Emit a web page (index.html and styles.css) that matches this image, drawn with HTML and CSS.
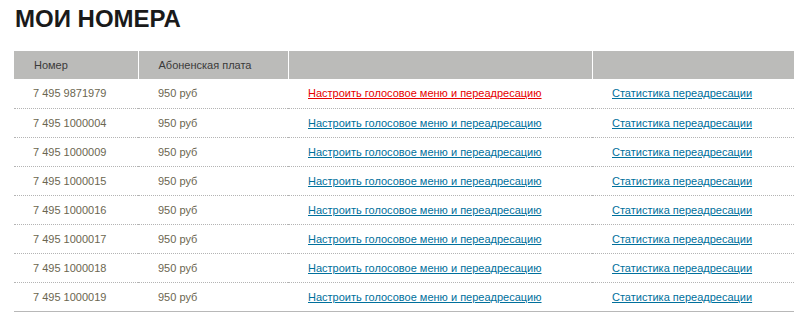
FILE: index.html
```html
<!DOCTYPE html>
<html lang="ru">
<head>
    <meta charset="UTF-8">
    <title>Мои номера</title>
    <link rel="stylesheet" href="styles.css">
</head>
<body>
    <div class="page">
        <h1 class="title">МОИ НОМЕРА</h1>

        <table class="numbers">
            <thead>
                <tr>
                    <th class="col-num">Номер</th>
                    <th class="col-fee">Абоненская плата</th>
                    <th class="col-menu"></th>
                    <th></th>
                </tr>
            </thead>
            <tbody>
                <tr>
                    <td>7 495 9871979</td>
                    <td>950 руб</td>
                    <td><a href="#" class="active">Настроить голосовое меню и переадресацию</a></td>
                    <td><a href="#">Статистика переадресации</a></td>
                </tr>
                <tr>
                    <td>7 495 1000004</td>
                    <td>950 руб</td>
                    <td><a href="#">Настроить голосовое меню и переадресацию</a></td>
                    <td><a href="#">Статистика переадресации</a></td>
                </tr>
                <tr>
                    <td>7 495 1000009</td>
                    <td>950 руб</td>
                    <td><a href="#">Настроить голосовое меню и переадресацию</a></td>
                    <td><a href="#">Статистика переадресации</a></td>
                </tr>
                <tr>
                    <td>7 495 1000015</td>
                    <td>950 руб</td>
                    <td><a href="#">Настроить голосовое меню и переадресацию</a></td>
                    <td><a href="#">Статистика переадресации</a></td>
                </tr>
                <tr>
                    <td>7 495 1000016</td>
                    <td>950 руб</td>
                    <td><a href="#">Настроить голосовое меню и переадресацию</a></td>
                    <td><a href="#">Статистика переадресации</a></td>
                </tr>
                <tr>
                    <td>7 495 1000017</td>
                    <td>950 руб</td>
                    <td><a href="#">Настроить голосовое меню и переадресацию</a></td>
                    <td><a href="#">Статистика переадресации</a></td>
                </tr>
                <tr>
                    <td>7 495 1000018</td>
                    <td>950 руб</td>
                    <td><a href="#">Настроить голосовое меню и переадресацию</a></td>
                    <td><a href="#">Статистика переадресации</a></td>
                </tr>
                <tr>
                    <td>7 495 1000019</td>
                    <td>950 руб</td>
                    <td><a href="#">Настроить голосовое меню и переадресацию</a></td>
                    <td><a href="#">Статистика переадресации</a></td>
                </tr>
            </tbody>
        </table>
    </div>
</body>
</html>
```

FILE: styles.css
```css
* {
    margin: 0;
    padding: 0;
    box-sizing: border-box;
}

body {
    background-color: #ffffff;
    font-family: "Liberation Sans", Arial, sans-serif;
    font-size: 11px;
    color: #333333;
}

.page {
    padding: 6px 6px 0 14px;
}

.title {
    font-size: 24px;
    font-weight: 700;
    color: #1a1a1a;
    line-height: 26px;
    margin-bottom: 19px;
    padding-left: 1px;
}

.numbers {
    width: 780px;
    border-collapse: collapse;
    text-align: left;
}

.numbers th {
    height: 28px;
    padding: 0 0 0 20px;
    background-color: #bbbbb9;
    font-weight: 400;
    color: #3a3a3a;
    border-left: 1px solid #ffffff;
}

.numbers th:first-child {
    border-left: none;
}

.col-num {
    width: 124px;
}

.col-fee {
    width: 150px;
}

.col-menu {
    width: 304px;
}

.numbers td {
    height: 29px;
    padding: 0 0 0 20px;
    color: #6b6650;
    border-bottom: 1px dotted #b4b4b4;
}

.numbers td:first-child {
    padding-left: 19px;
}

.numbers tbody tr:last-child td {
    border-bottom: 1px solid #b8b8b8;
}

.numbers a {
    color: #00709c;
    text-decoration: underline;
}

.numbers a.active {
    color: #e60000;
}
```
